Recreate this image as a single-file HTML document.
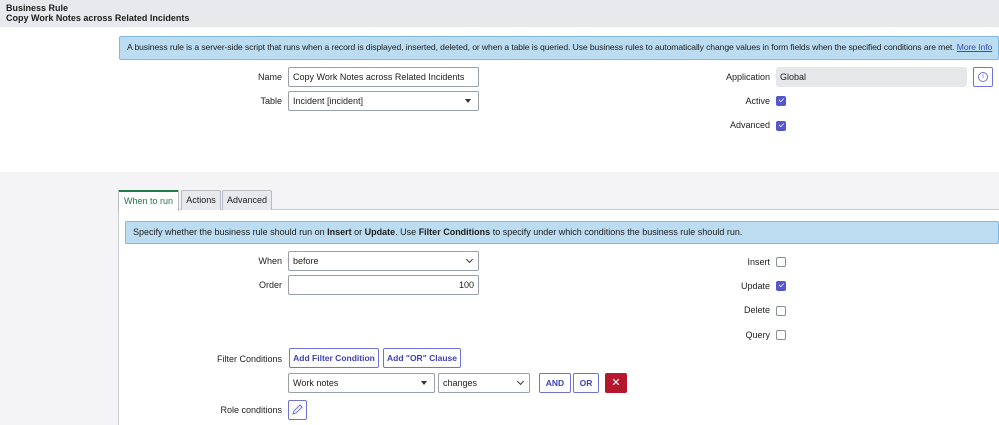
<!DOCTYPE html>
<html><head><style>
*{box-sizing:border-box;margin:0;padding:0}
body{width:999px;height:425px;overflow:hidden;background:#fff;font-family:"Liberation Sans",sans-serif;font-size:9px;color:#1d1d1d;position:relative}
.a{position:absolute}
.hdr{left:0;top:0;width:999px;height:27px;background:#e8e9ec;padding:3px 6px;font-weight:bold;font-size:9px;line-height:10px}
.info{background:#bcdcf1;border:1px solid #7fb8e0;border-radius:2px;padding:0 7px;line-height:21px;white-space:nowrap;overflow:hidden}
.lbl{text-align:right;width:120px;line-height:20px}
.inp{border:1px solid #9aa0a8;border-radius:2px;height:20px;line-height:18px;padding:0 4px;background:#fff}
.cb{width:10px;height:10px;border:1px solid #8a8f96;border-radius:2px;background:#fff}
.cb.on{background:#5258c8;border-color:#5258c8}
.cb.on:after{content:"";position:absolute;left:2px;top:1px;width:4px;height:2px;border-left:1px solid #cfd2ff;border-bottom:1px solid #cfd2ff;transform:rotate(-45deg)}
.btn{border:1px solid #6f73d6;border-radius:2px;color:#3d41b8;font-weight:bold;text-align:center;line-height:18px;height:20px;background:#fff;font-size:8.5px;white-space:nowrap}
.tab{top:190px;height:20px;border:1px solid #b9bcc2;border-bottom:none;background:#e8e9ec;line-height:19px;text-align:center;border-radius:2px 2px 0 0}
.caret{position:absolute;right:7px;top:7px;width:0;height:0;border-left:3px solid transparent;border-right:3px solid transparent;border-top:4px solid #333}
.chev{position:absolute;right:6px;top:5px;width:5px;height:5px;border-right:1.5px solid #333;border-bottom:1.5px solid #333;transform:rotate(45deg)}
</style></head><body>
<div class="a hdr">Business Rule<br>Copy Work Notes across Related Incidents</div>
<div class="a info" style="left:119px;top:36px;width:880px;height:24px;font-size:8.6px;letter-spacing:-0.1px">A business rule is a server-side script that runs when a record is displayed, inserted, deleted, or when a table is queried. Use business rules to automatically change values in form fields when the specified conditions are met. <span style="color:#3b49c4;text-decoration:underline">More Info</span></div>
<div class="a lbl" style="left:162px;top:67px">Name</div>
<div class="a inp" style="left:288px;top:67px;width:191px">Copy Work Notes across Related Incidents</div>
<div class="a lbl" style="left:162px;top:91px">Table</div>
<div class="a inp" style="left:288px;top:91px;width:191px">Incident [incident]<span class="caret"></span></div>
<div class="a lbl" style="left:650px;top:67px">Application</div>
<div class="a" style="left:776px;top:67px;width:191px;height:20px;background:#e6e7ea;border-radius:3px;line-height:20px;padding-left:4px">Global</div>
<div class="a" style="left:973px;top:67px;width:20px;height:20px;border:1px solid #6f73d6;border-radius:2px"><div class="a" style="left:4px;top:4px;width:10px;height:10px;border:1px solid #6f73d6;border-radius:50%;font-size:7px;line-height:8px;text-align:center;color:#6f73d6">i</div></div>
<div class="a lbl" style="left:650px;top:91px">Active</div>
<div class="a cb on" style="left:776px;top:96px"></div>
<div class="a lbl" style="left:650px;top:115px">Advanced</div>
<div class="a cb on" style="left:776px;top:121px"></div>
<div class="a" style="left:0;top:172px;width:999px;height:253px;background:#f4f4f6"></div>
<div class="a" style="left:118px;top:209px;width:881px;height:216px;background:#fff;border-left:1px solid #c9ccd1;border-top:1px solid #c9ccd1"></div>
<div class="a tab" style="left:118px;width:61px;background:#fff;border-top:2px solid #1f7a4a;color:#1f7a4a;height:21px">When to run</div>
<div class="a tab" style="left:181px;width:40px">Actions</div>
<div class="a tab" style="left:222px;width:50px">Advanced</div>
<div class="a info" style="left:125px;top:221px;width:874px;height:23px">Specify whether the business rule should run on <b>Insert</b> or <b>Update</b>. Use <b>Filter Conditions</b> to specify under which conditions the business rule should run.</div>
<div class="a lbl" style="left:162px;top:251px">When</div>
<div class="a inp" style="left:288px;top:251px;width:191px">before<span class="chev"></span></div>
<div class="a lbl" style="left:162px;top:275px">Order</div>
<div class="a inp" style="left:288px;top:275px;width:191px;text-align:right">100</div>
<div class="a lbl" style="left:650px;top:252px">Insert</div><div class="a cb" style="left:776px;top:257px"></div>
<div class="a lbl" style="left:650px;top:276px">Update</div><div class="a cb on" style="left:776px;top:281px"></div>
<div class="a lbl" style="left:650px;top:300px">Delete</div><div class="a cb" style="left:776px;top:306px"></div>
<div class="a lbl" style="left:650px;top:325px">Query</div><div class="a cb" style="left:776px;top:330px"></div>
<div class="a lbl" style="left:162px;top:349px">Filter Conditions</div>
<div class="a btn" style="left:289px;top:348px;width:90px">Add Filter Condition</div>
<div class="a btn" style="left:383px;top:348px;width:78px">Add "OR" Clause</div>
<div class="a inp" style="left:288px;top:373px;width:147px">Work notes<span class="caret"></span></div>
<div class="a inp" style="left:438px;top:373px;width:92px">changes<span class="chev"></span></div>
<div class="a btn" style="left:539px;top:373px;width:32px">AND</div>
<div class="a btn" style="left:573px;top:373px;width:26px">OR</div>
<div class="a" style="left:605px;top:373px;width:22px;height:20px;background:#b5172f;border-radius:2px;color:#fff;text-align:center;line-height:20px;font-size:11px">✕</div>
<div class="a lbl" style="left:162px;top:400px">Role conditions</div>
<div class="a btn" style="left:288px;top:400px;width:19px"><svg width="17" height="18" viewBox="0 0 17 18"><path d="M4 13 L5 10 L11 4 L13 6 L7 12 Z" fill="none" stroke="#6f73d6" stroke-width="1"/></svg></div>
</body></html>
